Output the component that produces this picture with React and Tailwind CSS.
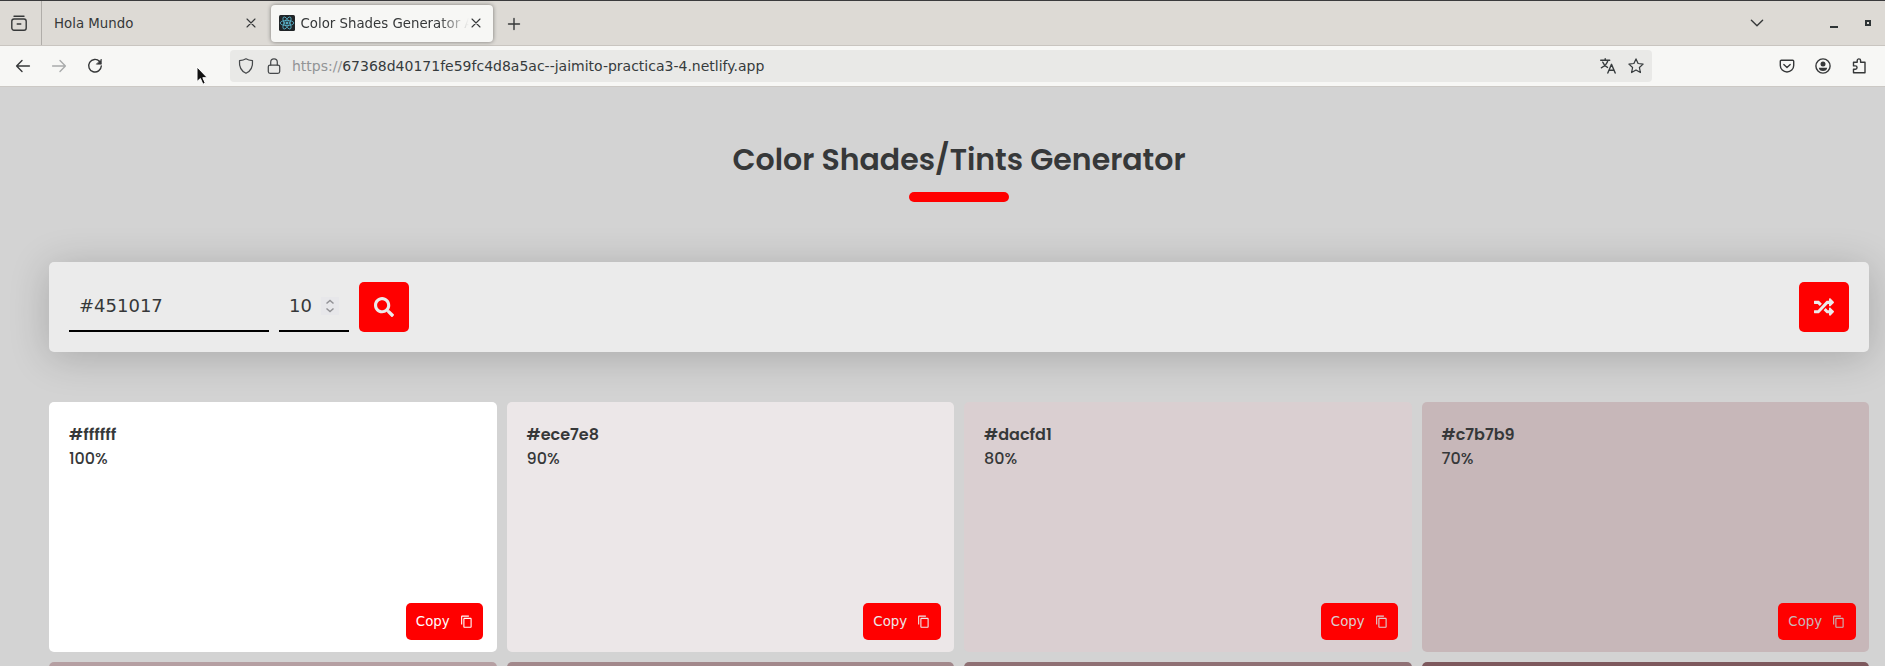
import { FaSearch, FaRandom } from 'react-icons/fa';
import { MdContentCopy } from 'react-icons/md';

const swatches = [
  { hex: '#ffffff', pct: '100%', bg: 'bg-[#ffffff]', fg: 'text-[#ffffff]' },
  { hex: '#ece7e8', pct: '90%', bg: 'bg-[#ece7e8]', fg: 'text-[#ece7e8]' },
  { hex: '#dacfd1', pct: '80%', bg: 'bg-[#dacfd1]', fg: 'text-[#dacfd1]' },
  { hex: '#c7b7b9', pct: '70%', bg: 'bg-[#c7b7b9]', fg: 'text-[#c7b7b9]' },
];

const nextRow = ['bg-[#b59fa2]', 'bg-[#a2888b]', 'bg-[#8f7074]', 'bg-[#7d585d]'];

function Icon({ children, className = '', size = 16, width = 1.25 }) {
  return (
    <svg width={size} height={size} viewBox="0 0 16 16" fill="none" stroke="currentColor" strokeWidth={width}
      strokeLinecap="round" strokeLinejoin="round" className={`block shrink-0 ${className}`}>
      {children}
    </svg>
  );
}

const Cross = ({ className }) => (
  <Icon className={className} width={1.1}><path d="M4 4l8 8M12 4l-8 8" /></Icon>
);

function TabBar() {
  return (
    <div className="flex h-[46px] shrink-0 items-center border-t border-b border-t-[#3a3a3c] border-b-[#c9c5c0] bg-[#dddad5] text-[13.33px]">
      <div className="flex h-full w-[42px] items-center border-r border-[#b0ada9] pl-[11px]">
        <Icon width={1.4}>
          <path d="M3 1.2h10" />
          <rect x="0.8" y="4" width="14.4" height="11.2" rx="2.2" />
          <path d="M6.2 9h3.6" />
        </Icon>
      </div>
      <div className="flex h-full w-[228px] items-center pl-[12px]">
        <span className="w-[189px] pt-[2px]">Hola Mundo</span>
        <Cross />
      </div>
      <div className="ml-[0.5px] flex h-[37px] w-[222px] items-center rounded-[4px] bg-[#f7f7f5] pl-2 shadow-[0_0_4px_rgba(0,0,0,0.45)]">
        <svg width="16" height="16" viewBox="0 0 16 16" className="block shrink-0" fill="none" stroke="#5cb8d0" strokeWidth="0.8">
          <rect width="16" height="16" rx="1.5" fill="#202427" stroke="none" />
          <ellipse cx="8" cy="8" rx="6.8" ry="2.6" />
          <ellipse cx="8" cy="8" rx="6.8" ry="2.6" transform="rotate(60 8 8)" />
          <ellipse cx="8" cy="8" rx="6.8" ry="2.6" transform="rotate(120 8 8)" />
          <circle cx="8" cy="8" r="1.1" fill="#5cb8d0" />
        </svg>
        <span className="ml-[6px] w-[168px] overflow-hidden pt-[2px] whitespace-nowrap [mask-image:linear-gradient(to_right,black_82%,transparent_100%)]">
          Color Shades Generator A
        </span>
        <Cross className="-ml-[0.5px]" />
      </div>
      <Icon className="ml-[13px] mt-[2px]" width={1.4}><path d="M8 2.5v11M2.5 8h11" /></Icon>
      <div className="ml-auto flex items-center pr-[14px]">
        <Icon width={1.4}><path d="M2.4 5.2L8 10.7l5.6-5.5" /></Icon>
        <div className="mt-[7px] ml-[65px] h-[2px] w-[8px] bg-[#2e3436]" />
        <div className="ml-[27px] h-[6px] w-[6px] border-2 border-[#2e3436]" />
      </div>
    </div>
  );
}

function NavBar() {
  return (
    <div className="relative flex h-[41px] shrink-0 items-center border-b border-[#ccc9c5] bg-[#f7f7f5] pl-[15px]">
      <Icon width={1.4}><path d="M14.4 8H1.6M7 2.6L1.6 8 7 13.4" /></Icon>
      <Icon className="ml-[20px] text-[#a9abab]" width={1.4}><path d="M1.6 8h12.8M9 2.6L14.4 8 9 13.4" /></Icon>
      <Icon className="ml-[20px]" width={1.4}>
        <path d="M12.6 3.4A6.3 6.3 0 1 0 14.3 8" />
        <path d="M14.4 1.4v4.8H9.6z" fill="currentColor" strokeWidth="0.6" />
      </Icon>
      <div className="ml-[127px] flex h-[32px] w-[1422px] items-center rounded-[4px] bg-[#e9e9e7] pl-[8px] text-[14px] text-[#363b3d]">
        <Icon className="text-[#46494b]"><path d="M8 .8c2 1.3 4.100 1.700 6.500 1.900.500 5.900-1.700 10.300-6.500 12.600C3.200 13 1 8.600 1.500 2.700 3.900 2.500 6 2.100 8 .8z" /></Icon>
        <Icon className="ml-[12px] text-[#46494b]">
          <rect x="2.300" y="7" width="11.400" height="8.300" rx="1.800" />
          <path d="M4.700 7V4.200a3.300 3.400 0 0 1 6.600 0V7" />
        </Icon>
        <span className="ml-[10px] whitespace-nowrap"><span className="text-[#929496]">https://</span>67368d40171fe59fc4d8a5ac--jaimito-practica3-4.netlify.app</span>
        <Icon className="ml-auto" width={1.4}>
          <path d="M.7 2.200h9M5.200.8v1.400M8 2.200C7.200 5.500 4.500 8.300 1.300 9.800M2.800 4.200c1 2.500 2.700 4.300 4.700 5.200" />
          <path d="M7.800 15l3.700-8.700L15.200 15M9 12.300h5" />
        </Icon>
        <Icon className="mr-2 ml-[12px]"><path d="M8 .9l2.100 4.600 5 .6-3.700 3.400 1 5L8 12l-4.400 2.500 1-5L.9 6.100l5-.6z" /></Icon>
      </div>
      <div className="ml-auto flex items-center gap-[20px] pr-[18px]">
        <Icon width={1.4}>
          <path d="M2.300 2.300h11.400a1 1 0 0 1 1 1V7.500a6.700 6.500 0 0 1-13.400 0V3.300a1 1 0 0 1 1-1z" />
          <path d="M4.800 6.600L8 9.500l3.200-2.900" />
        </Icon>
        <Icon width={1.4}>
          <circle cx="8" cy="8" r="7.100" />
          <circle cx="8" cy="6" r="2.500" fill="currentColor" stroke="none" />
          <path d="M3.800 9.700h8.400c0 2-1.800 3.300-4.200 3.300S3.800 11.700 3.800 9.700z" fill="currentColor" stroke="none" />
        </Icon>
        <Icon width={1.4}>
          <path d="M2.500 4.300h3.700V2.600a1.700 1.700 0 0 1 3.400 0v1.700H14v10.400H2.500v-3.500h1.900a1.600 1.600 0 0 0 0-3.300H2.500z" />
        </Icon>
      </div>
      <svg width="14" height="20" viewBox="0 0 14 20" className="absolute top-[20px] left-[196px]">
        <path d="M1 1v14.500l3.400-3 2.500 5.700 2.400-1-2.500-5.500h4.500z" fill="#111" stroke="#fff" strokeWidth="1" />
      </svg>
    </div>
  );
}

function Swatch({ color }) {
  return (
    <div className={`flex h-[250px] flex-col rounded-[5px] pt-[21px] pr-[13.5px] pb-3 pl-[20px] font-['Poppins','Inter',sans-serif] ${color.bg}`}>
      <h4 className="text-[16px] leading-[24px] font-semibold">{color.hex}</h4>
      <p className="text-[16px] leading-[24px] font-medium">{color.pct}</p>
      <button className={`mt-auto ml-auto flex h-[37px] items-center rounded-[5px] bg-[#ff0000] px-[10px] font-['DejaVu_Sans',sans-serif] text-[13.33px] ${color.fg}`}>
        Copy
        <MdContentCopy className="ml-[10px]" size={13.33} />
      </button>
    </div>
  );
}

export default function App() {
  return (
    <div className="flex h-[666px] w-[1885px] flex-col overflow-hidden bg-[#d3d3d3] font-['DejaVu_Sans',sans-serif] text-[#363839]">
      <TabBar />
      <NavBar />
      <main className="pt-[49px] pr-[16px] pl-[49px]">
        <header className="flex flex-col items-center">
          <h1 className="h-[56px] font-['Poppins','Inter',sans-serif] text-[30px] leading-[48px] font-semibold whitespace-nowrap">Color Shades/Tints Generator</h1>
          <div className="h-[10px] w-[100px] rounded-[5px] bg-[#ff0000]" />
        </header>
        <form className="mt-[60px] flex h-[90px] items-center rounded-[5px] bg-[#ebebeb] px-[20px] shadow-[0_5px_40px_rgba(0,0,0,0.2)]">
          <div className="flex h-[50px] w-[200px] items-center border-b-2 border-black pb-[2px] pl-[10px] text-[18px]">#451017</div>
          <div className="ml-[10px] flex h-[50px] w-[70px] items-center border-b-2 border-black pb-[2px] pl-[10px] text-[18px]">
            10
            <svg width="18" height="18" viewBox="0 0 18 18" className="mt-[2px] ml-[9px] block" fill="none" stroke="#929296" strokeWidth="1.500">
              <rect width="18" height="18" fill="#e7e7ea" stroke="none" />
              <path d="M5.500 6.500L9 3.500l3.500 3M5.500 11.500L9 14.500l3.500-3" />
            </svg>
          </div>
          <button className="ml-[10px] flex size-[50px] items-center justify-center rounded-[5px] bg-[#ff0000] text-[#ebebeb]"><FaSearch size={20} /></button>
          <button className="ml-auto flex size-[50px] items-center justify-center rounded-[5px] bg-[#ff0000] text-[#ebebeb]"><FaRandom size={20} /></button>
        </form>
        <section className="mt-[50px] grid grid-cols-4 gap-[10px]">
          {swatches.map((c) => <Swatch key={c.hex} color={c} />)}
          {nextRow.map((bg) => <div key={bg} className={`h-[250px] rounded-[5px] ${bg}`} />)}
        </section>
      </main>
    </div>
  );
}
